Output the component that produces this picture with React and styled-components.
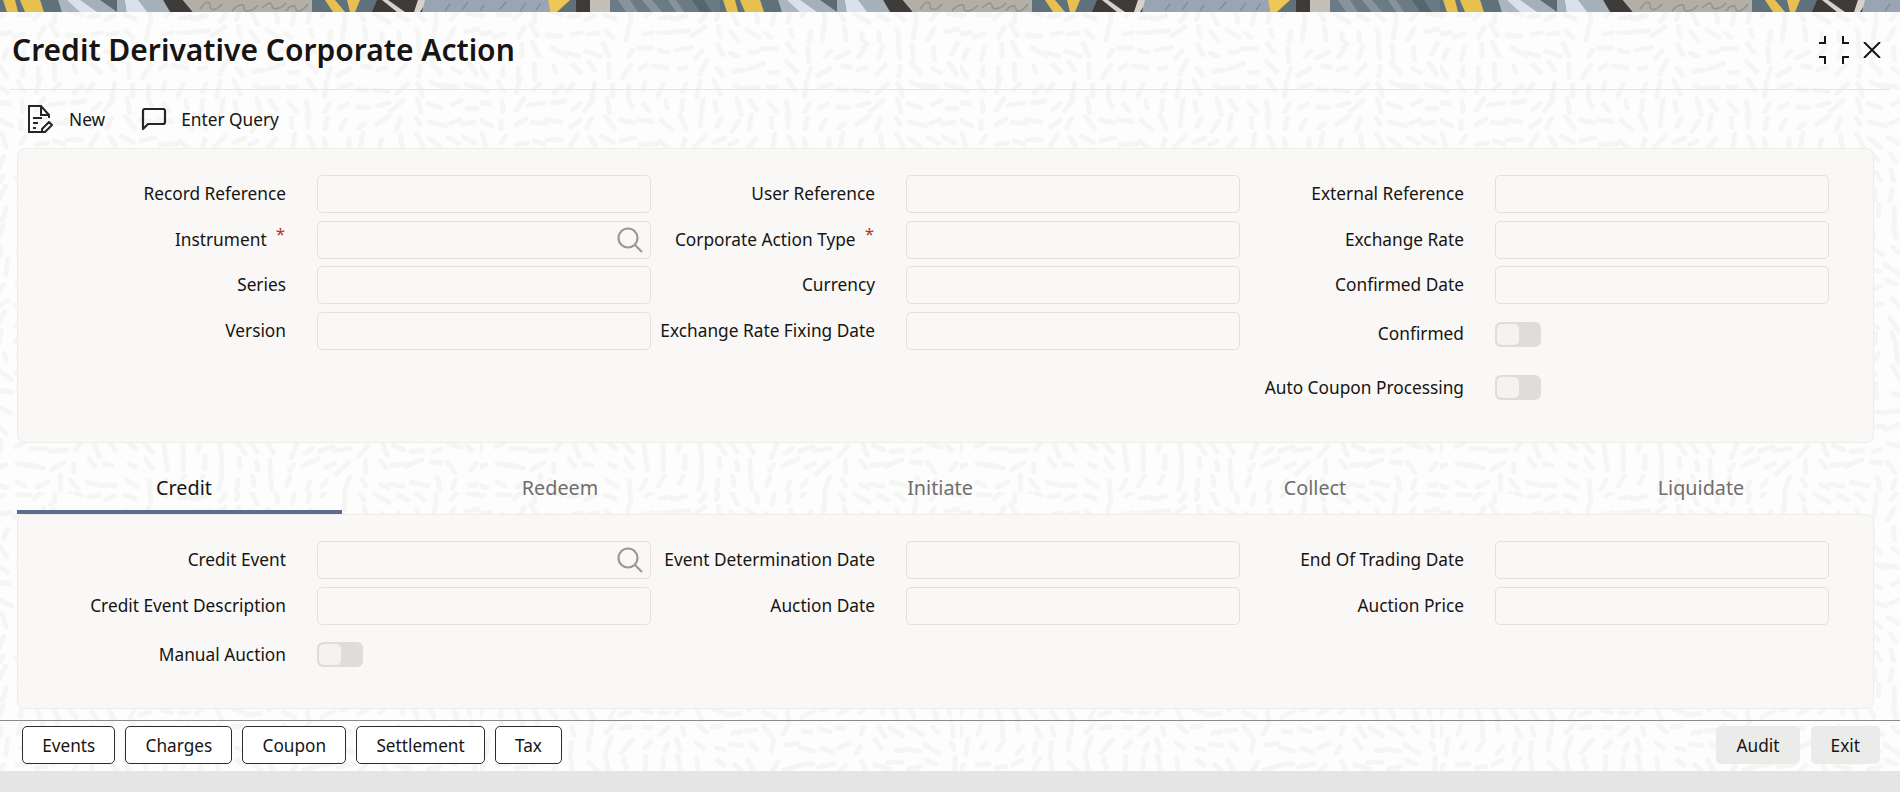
import React from 'react'
import styled, { createGlobalStyle } from 'styled-components'

// page texture: short rounded dashes following a wavy field, tiled
const makeTexture = () => {
  const size = 480
  const cell = 18
  const dashes = []
  let seed = 11
  const rnd = () => {
    seed = (seed * 16807) % 2147483647
    return seed / 2147483647
  }
  for (let y = 0; y < size; y += cell) {
    for (let x = 0; x < size; x += cell) {
      const cx = x + rnd() * 7
      const cy = y + rnd() * 7
      const u = (cx / size) * Math.PI * 2
      const v = (cy / size) * Math.PI * 2
      const angle = Math.PI / 2 + 1 * Math.sin(u * 3 + Math.cos(v * 2)) + 0.9 * Math.cos(v * 3 + u * 2) + (rnd() - 0.5) * 0.4
      const len = 3.5 + rnd() * 5
      const dx = Math.cos(angle) * len
      const dy = Math.sin(angle) * len
      dashes.push(`M${(cx - dx).toFixed(1)} ${(cy - dy).toFixed(1)}L${(cx + dx).toFixed(1)} ${(cy + dy).toFixed(1)}`)
    }
  }
  const svg = `<svg xmlns='http://www.w3.org/2000/svg' width='${size}' height='${size}'><path d='${dashes.join('')}' stroke='#f5f5f4' stroke-width='5' stroke-linecap='round' fill='none'/></svg>`
  return `url("data:image/svg+xml,${encodeURIComponent(svg)}")`
}

const texture = makeTexture()

const GlobalStyle = createGlobalStyle`
  html, body {
    margin: 0;
    padding: 0;
    background: #e5e5e5;
  }
  * {
    box-sizing: border-box;
  }
`

const Page = styled.div`
  display: flex;
  flex-direction: column;
  height: 792px;
  overflow: hidden;
  font-family: 'Noto Sans', 'Open Sans', sans-serif;
  color: #161513;
`

const BannerSvg = styled.svg`
  display: block;
  flex: none;
  width: 100%;
  height: 12px;
`

const BannerFill = styled.rect`
  filter: blur(0.6px);
`

const Main = styled.div`
  height: 759px;
  flex: none;
  display: flex;
  flex-direction: column;
  background-color: #fdfdfd;
  background-image: ${texture};
`

const Header = styled.header`
  display: flex;
  align-items: center;
  justify-content: space-between;
  height: 78px;
  margin: 0 10px;
  padding: 0 9px 2px 2px;
  border-bottom: 1px solid #e6e5e3;
`

const Title = styled.h1`
  margin: 0;
  font-size: 30px;
  font-weight: 600;
`

const WindowIcons = styled.div`
  display: flex;
  align-items: center;
  gap: 14px;
`

const Toolbar = styled.div`
  display: flex;
  align-items: center;
  height: 58px;
  padding-left: 28px;
  gap: 36px;
`

const ToolButton = styled.div`
  display: flex;
  align-items: center;
  gap: ${(p) => p.$gap}px;
  font-size: 17.3px;
`

const Panel = styled.section`
  margin: 0 26px 0 17px;
  height: ${(p) => p.$height}px;
  padding: 26px 0 0 43px;
  background: #f9f8f6;
  border: 1px solid #eeedea;
  border-radius: 8px;
  display: grid;
  grid-template-columns: repeat(3, 589px);
  align-items: start;
`

const Column = styled.div`
  display: flex;
  flex-direction: column;
  gap: 7.6px;
`

const Field = styled.div`
  display: grid;
  grid-template-columns: 225px 333.6px;
  column-gap: 31px;
  align-items: center;
  padding-top: ${(p) => p.$pad || 0}px;
`

const Label = styled.label`
  padding-bottom: 1px;
  font-size: 17.3px;
  text-align: right;
  white-space: nowrap;
`

const Star = styled.span`
  margin-left: 9px;
  margin-right: 1px;
  position: relative;
  top: -6px;
  color: #b3352b;
  font-size: 17px;
`

const InputBox = styled.div`
  position: relative;
  height: 38px;
`

const Input = styled.input`
  display: block;
  width: 100%;
  height: 100%;
  background: #f9f8f6;
  border: 1px solid #e3e1de;
  border-radius: 5px;
  outline: none;
`

const SearchIcon = styled.svg`
  position: absolute;
  top: 6px;
  right: 8px;
  width: 26px;
  height: 26px;
`

const Toggle = styled.div`
  width: 46px;
  height: 25px;
  padding: 2px;
  background: #dedddb;
  border-radius: 6px;
`

const Knob = styled.div`
  width: 22px;
  height: 21px;
  background: #f5f2f0;
  border-radius: 5px;
`

const Tabs = styled.nav`
  display: grid;
  grid-template-columns: 325px 436px 324px 426px 346px;
  height: 71px;
  margin: 0 26px 0 17px;
`

const Tab = styled.div`
  display: flex;
  align-items: center;
  justify-content: center;
  padding-top: 22px;
  padding-left: ${(p) => (p.$active ? 9 : 0)}px;
  font-size: 19.8px;
  color: ${(p) => (p.$active ? '#161513' : '#6f6e6a')};
  border-bottom: 4px solid ${(p) => (p.$active ? '#5f6b8a' : 'transparent')};
`

const Footer = styled.footer`
  display: flex;
  justify-content: space-between;
  align-items: center;
  height: 51px;
  margin-top: 11px;
  padding: 0 20px 2px 22px;
  border-top: 1px solid #8b8b8a;
`

const ButtonRow = styled.div`
  display: flex;
  gap: ${(p) => p.$gap}px;
`

const OutlineButton = styled.button`
  height: 38px;
  padding: 0 19.2px;
  font: inherit;
  font-size: 17.2px;
  color: #161513;
  background: #fff;
  border: 1px solid #2d2c2a;
  border-radius: 5px;
`

const GreyButton = styled.button`
  height: 38px;
  padding: 0 20px;
  font: inherit;
  font-size: 17.3px;
  color: #161513;
  background: #ebebea;
  border: none;
  border-radius: 5px;
`

const BottomBar = styled.div`
  flex: 1;
  background: #e5e5e5;
`

const bands = [
  // top-left, top-right, bottom-right, bottom-left, colour
  [0, 60, 62, 0, '#5f717b'],
  [3, 15, 18, 7, '#e6c152'],
  [20, 40, 44, 25, '#e6c152'],
  [58, 70, 84, 62, '#aab5be'],
  [67, 80, 97, 80, '#d9e1ec'],
  [80, 125, 127, 97, '#a5b0ba'],
  [100, 117, 117, 117, '#5c6a73'],
  [125, 138, 147, 127, '#d9e1ec'],
  [138, 163, 170, 147, '#a5b0ba'],
  [163, 183, 193, 170, '#3f3b39'],
  [183, 312, 312, 193, '#b3aea6'],
  [312, 380, 374, 312, '#5f717b'],
  [325, 335, 345, 333, '#e6c152'],
  [347, 360, 355, 350, '#e6c152'],
  [377, 422, 425, 372, '#3e3a38'],
  [382, 388, 405, 397, '#d5d2cc'],
  [418, 428, 420, 414, '#d5d2cc'],
  [425, 550, 552, 422, '#9aa5b4'],
  [548, 576, 576, 550, '#5f717b'],
  [548, 570, 557, 550, '#ecc75a'],
  [576, 590, 590, 576, '#3f3b39'],
  [590, 610, 610, 590, '#c4c0b9'],
  [610, 720, 720, 610, '#6a7b86'],
  [618, 630, 638, 626, '#87949f'],
  [642, 652, 662, 652, '#87949f'],
  [668, 676, 684, 676, '#87949f'],
  [692, 704, 712, 700, '#56666f'],
]

const Banner = () => (
  <BannerSvg aria-hidden="true">
    <defs>
      <pattern id="banner" width="720" height="12" patternUnits="userSpaceOnUse">
        {bands.map(([a, b, c, d, fill], i) => (
          <polygon key={i} points={`${a},0 ${b},0 ${c},12 ${d},12`} fill={fill} />
        ))}
        <path
          d="M200 9c6-9 10-8 10-3s6 5 12-2M232 11c6-7 12-8 12-3s8 4 14-3M262 8c6-6 10-6 10-2s8 4 14-3M286 11c5-7 10-6 10-2s6 3 12-5"
          fill="none"
          stroke="#97928a"
          strokeWidth="1.6"
        />
        <path
          d="M445 11l5-7M462 10l6-8M480 11l4-6M500 9l6-7M520 11l6-8M536 10l5-7"
          stroke="#7c8796"
          strokeWidth="1.2"
        />
      </pattern>
    </defs>
    <BannerFill x="-720" y="-12" width="3600" height="36" fill="url(#banner)" />
  </BannerSvg>
)

const CollapseIcon = () => (
  <svg width="30" height="28" viewBox="0 0 30 28" fill="none" stroke="#161513" strokeWidth="2">
    <path d="M0 7h6V0M24 0v7h6M0 21h6v7M24 28v-7h6" />
  </svg>
)

const CloseIcon = () => (
  <svg width="18" height="16" viewBox="0 0 18 16" fill="none" stroke="#161513" strokeWidth="2">
    <path d="M1 0l16 16M17 0L1 16" />
  </svg>
)

const NewIcon = () => (
  <svg width="25" height="28" viewBox="0 0 25 28" fill="none" stroke="#262523" strokeWidth="2">
    <path d="M16 27H1V1h12l8 9v3" />
    <path d="M13 1v9h8" />
    <path d="M5 13h9M5 18h5M5 23h3" />
    <path d="M14 24l7-7 3 3-7 7h-3z" strokeLinejoin="round" />
  </svg>
)

const QueryIcon = () => (
  <svg width="26" height="23" viewBox="0 0 26 23" fill="none" stroke="#262523" strokeWidth="2.2">
    <path d="M2 21V3a2 2 0 0 1 2-2h18a2 2 0 0 1 2 2v11a2 2 0 0 1-2 2H7z" strokeLinejoin="round" />
  </svg>
)

const Search = () => (
  <SearchIcon viewBox="0 0 26 26" fill="none" stroke="#9a9996" strokeWidth="2.2">
    <circle cx="11" cy="11" r="9.5" />
    <path d="M18 18l7 7" />
  </SearchIcon>
)

const TextField = ({ label, required, search }) => (
  <Field>
    <Label>
      {label}
      {required && <Star>*</Star>}
    </Label>
    <InputBox>
      <Input />
      {search && <Search />}
    </InputBox>
  </Field>
)

const ToggleField = ({ label, pad }) => (
  <Field $pad={pad}>
    <Label>{label}</Label>
    <Toggle>
      <Knob />
    </Toggle>
  </Field>
)

const App = () => (
  <Page>
    <GlobalStyle />
    <Banner />
    <Main>
      <Header>
        <Title>Credit Derivative Corporate Action</Title>
        <WindowIcons>
          <CollapseIcon />
          <CloseIcon />
        </WindowIcons>
      </Header>
      <Toolbar>
        <ToolButton $gap={16}>
          <NewIcon />
          New
        </ToolButton>
        <ToolButton $gap={14}>
          <QueryIcon />
          Enter Query
        </ToolButton>
      </Toolbar>
      <Panel $height={295}>
        <Column>
          <TextField label="Record Reference" />
          <TextField label="Instrument" required search />
          <TextField label="Series" />
          <TextField label="Version" />
        </Column>
        <Column>
          <TextField label="User Reference" />
          <TextField label="Corporate Action Type" required />
          <TextField label="Currency" />
          <TextField label="Exchange Rate Fixing Date" />
        </Column>
        <Column>
          <TextField label="External Reference" />
          <TextField label="Exchange Rate" />
          <TextField label="Confirmed Date" />
          <ToggleField label="Confirmed" pad={10} />
          <ToggleField label="Auto Coupon Processing" pad={21} />
        </Column>
      </Panel>
      <Tabs>
        <Tab $active>Credit</Tab>
        <Tab>Redeem</Tab>
        <Tab>Initiate</Tab>
        <Tab>Collect</Tab>
        <Tab>Liquidate</Tab>
      </Tabs>
      <Panel $height={195}>
        <Column>
          <TextField label="Credit Event" search />
          <TextField label="Credit Event Description" />
          <ToggleField label="Manual Auction" pad={10} />
        </Column>
        <Column>
          <TextField label="Event Determination Date" />
          <TextField label="Auction Date" />
        </Column>
        <Column>
          <TextField label="End Of Trading Date" />
          <TextField label="Auction Price" />
        </Column>
      </Panel>
      <Footer>
        <ButtonRow $gap={10}>
          <OutlineButton>Events</OutlineButton>
          <OutlineButton>Charges</OutlineButton>
          <OutlineButton>Coupon</OutlineButton>
          <OutlineButton>Settlement</OutlineButton>
          <OutlineButton>Tax</OutlineButton>
        </ButtonRow>
        <ButtonRow $gap={11}>
          <GreyButton>Audit</GreyButton>
          <GreyButton>Exit</GreyButton>
        </ButtonRow>
      </Footer>
    </Main>
    <BottomBar />
  </Page>
)

export default App
